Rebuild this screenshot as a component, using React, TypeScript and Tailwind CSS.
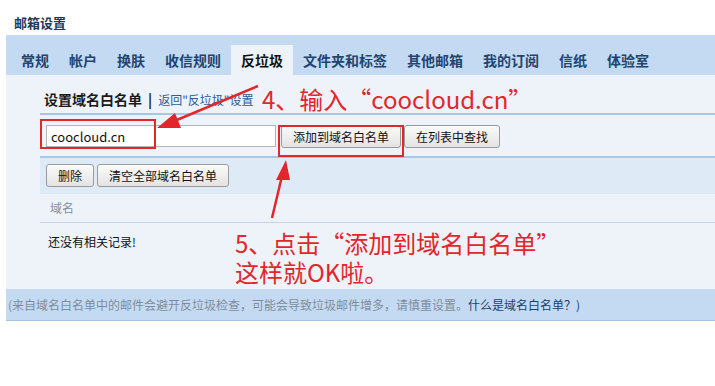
import React from "react";

const font = { fontFamily: '"Noto Sans CJK SC", "Noto Sans", sans-serif' };

const tabs = ["常规", "帐户", "换肤", "收信规则", "反垃圾", "文件夹和标签", "其他邮箱", "我的订阅", "信纸", "体验室"];

function Btn({ children }: { children: React.ReactNode }) {
  return (
    <button className="h-[23px] px-[11px] text-[12px] leading-none text-[#111] border border-[#9a9a9a] rounded-[3px] bg-gradient-to-b from-[#fbfbfb] to-[#e3e3e3] shadow-[inset_0_1px_0_#fff]">
      {children}
    </button>
  );
}

export default function App() {
  return (
    <div className="relative w-[715px] h-[386px] bg-white overflow-hidden" style={font}>
      <div className="h-[35px] pl-[14px] pt-[14px] text-[13px] font-bold leading-[18px] text-[#1d3a5c]">邮箱设置</div>
      <div className="ml-[6px] h-[40px] bg-[#c4daf2] flex items-end pl-[5px]">
        {tabs.map((t) => (
          <div
            key={t}
            className={
              "h-[30px] px-[10px] flex items-center text-[14px] font-bold leading-none " +
              (t === "反垃圾" ? "bg-[#eef3fa] text-[#111]" : "text-[#21456f]")
            }
          >
            {t}
          </div>
        ))}
      </div>
      <div className="ml-[6px] h-[214px] bg-[#eef3fa] pl-[34px]">
        <div className="h-[40px] flex items-end pb-[7px] pl-[4px] border-b-2 border-[#a9c6e6]">
          <span className="text-[14px] font-bold text-[#1a1a1a] leading-none">设置域名白名单</span>
          <span className="text-[14px] font-bold text-[#1a1a1a] leading-none mx-[6px]">|</span>
          <span className="text-[12px] text-[#2d5c96] leading-none">返回"反垃圾"设置</span>
        </div>
        <div className="h-[43px] flex items-start pt-[10px] pl-[6px] gap-[5px] border-b-2 border-[#a9c6e6]">
          <div className="w-[230px] h-[22px] bg-white border border-[#b5b5b5] flex items-center pl-[4px] text-[13px] text-[#111] leading-none">
            coocloud.cn
          </div>
          <div className="flex gap-[3px]">
            <Btn>添加到域名白名单</Btn>
            <Btn>在列表中查找</Btn>
          </div>
        </div>
        <div className="h-[36px] bg-[#dfeaf7] flex items-start pt-[6px] pl-[6px] gap-[3px]">
          <Btn>删除</Btn>
          <Btn>清空全部域名白名单</Btn>
        </div>
        <div className="h-[29px] border-b border-[#c6d4e4] flex items-center pl-[10px] text-[12px] text-[#8391a0] leading-none">
          域名
        </div>
        <div className="h-[38px] flex items-center pl-[8px] text-[12px] text-[#111] leading-none">还没有相关记录!</div>
      </div>
      <div className="ml-[6px] h-[32px] bg-[#c4daf2] border-b border-[#a7c2df] flex items-center pl-[2px] text-[12px] leading-none text-[#7f8d9c]">
        (来自域名白名单中的邮件会避开反垃圾检查，可能会导致垃圾邮件增多，请慎重设置。
        <span className="text-[#1d3f6d]">什么是域名白名单？)</span>
      </div>

      {/* annotations */}
      <div className="absolute left-[40px] top-[119px] w-[116px] h-[30px] border-2 border-[#e2262b]" />
      <div className="absolute left-[278px] top-[125px] w-[126px] h-[32px] border-2 border-[#e2262b]" />
      <svg className="absolute left-0 top-0 pointer-events-none" width="715" height="386">
        <line x1="258" y1="86" x2="172" y2="122" stroke="#e2262b" strokeWidth="2.5" />
        <polygon points="157,128 175,113 181,128" fill="#e2262b" />
        <line x1="272" y1="218" x2="282" y2="176" stroke="#e2262b" strokeWidth="2.5" />
        <polygon points="286,160 276,180 290,180" fill="#e2262b" />
      </svg>
      <div className="absolute left-[262px] top-[87px] text-[24px] leading-none text-[#e2262b] whitespace-nowrap">
        4、输入“coocloud.cn”
      </div>
      <div className="absolute left-[235px] top-[230px] h-[26px] text-[24px] leading-[26px] text-[#e2262b] whitespace-nowrap">
        5、点击“添加到域名白名单”
      </div>
      <div className="absolute left-[235px] top-[259px] h-[26px] text-[24px] leading-[26px] text-[#e2262b] whitespace-nowrap">
        这样就OK啦。
      </div>
    </div>
  );
}
